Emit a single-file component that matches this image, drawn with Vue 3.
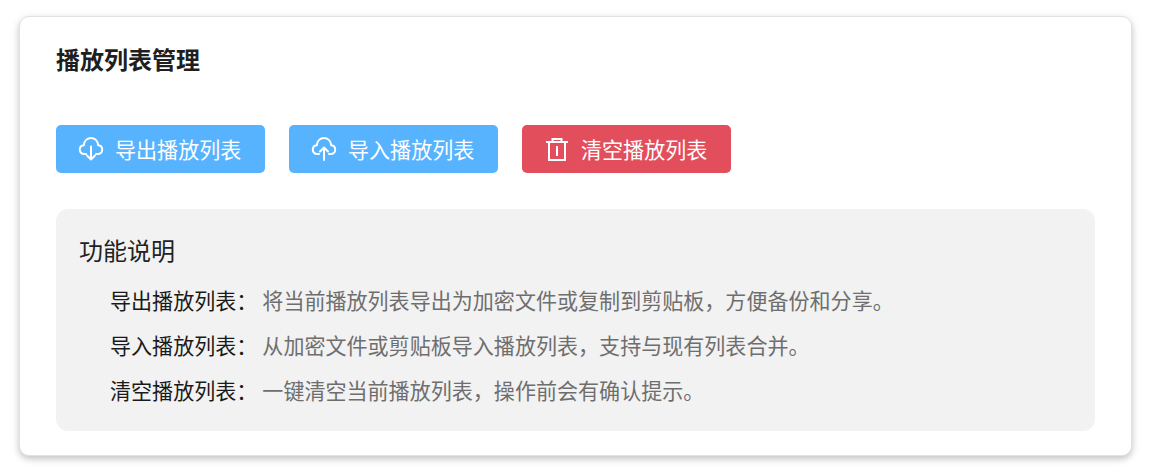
<template>
  <div class="page">
    <section class="card">
      <h2 class="title">播放列表管理</h2>
      <div class="actions">
        <button v-for="btn in buttons" :key="btn.label" class="btn" :class="btn.type">
          <svg v-if="btn.icon === 'down'" class="icon" viewBox="0 0 26 26" fill="none" stroke="currentColor" stroke-width="2" stroke-linecap="round" stroke-linejoin="round">
            <path d="M8 18H6.2C3.6 18 1.8 16 1.8 13.7C1.8 11.4 3.5 9.5 5.8 9.3C6.3 5 9.3 2 13 2C16.7 2 19.7 5 20.2 9.3C22.5 9.5 24.2 11.4 24.2 13.7C24.2 16 22.4 18 19.8 18H18" />
            <path d="M13 10.5V23.5M9 19.5L13 23.5L17 19.5" />
          </svg>
          <svg v-else-if="btn.icon === 'up'" class="icon" viewBox="0 0 26 26" fill="none" stroke="currentColor" stroke-width="2" stroke-linecap="round" stroke-linejoin="round">
            <path d="M8 18H6.2C3.6 18 1.8 16 1.8 13.7C1.8 11.4 3.5 9.5 5.8 9.3C6.3 5 9.3 2 13 2C16.7 2 19.7 5 20.2 9.3C22.5 9.5 24.2 11.4 24.2 13.7C24.2 16 22.4 18 19.8 18H18" />
            <path d="M13 24V11.5M9 15.5L13 11.5L17 15.5" />
          </svg>
          <svg v-else class="icon" viewBox="0 0 26 26" fill="none" stroke="currentColor" stroke-width="2">
            <path d="M2 6H24M8.5 6V3H17.5V6M5 6V24H21V6M13 10V20" />
          </svg>
          <span>{{ btn.label }}</span>
        </button>
      </div>
      <div class="info">
        <h3 class="info-title">功能说明</h3>
        <ul class="info-list">
          <li v-for="item in items" :key="item.name">
            <span class="name">{{ item.name }}：</span><span class="desc">{{ item.desc }}</span>
          </li>
        </ul>
      </div>
    </section>
  </div>
</template>

<script setup>
const buttons = [
  { label: '导出播放列表', type: 'primary', icon: 'down' },
  { label: '导入播放列表', type: 'primary', icon: 'up' },
  { label: '清空播放列表', type: 'danger', icon: 'trash' },
]

const items = [
  { name: '导出播放列表', desc: '将当前播放列表导出为加密文件或复制到剪贴板，方便备份和分享。' },
  { name: '导入播放列表', desc: '从加密文件或剪贴板导入播放列表，支持与现有列表合并。' },
  { name: '清空播放列表', desc: '一键清空当前播放列表，操作前会有确认提示。' },
]
</script>

<style>
html,
body {
  margin: 0;
  background: #fff;
}
</style>

<style scoped>
.page {
  padding: 16px 18px 19px 19px;
  font-family: "Noto Sans CJK SC", "Noto Sans", sans-serif;
}

.card {
  height: 440px;
  box-sizing: border-box;
  padding: 22px 36px;
  background: #fff;
  border: 1px solid #e2e2e2;
  border-radius: 10px;
  box-shadow: 0 3px 6px rgba(0, 0, 0, 0.2), 0 2px 14px rgba(0, 0, 0, 0.05);
}

.title {
  margin: 0;
  height: 40px;
  line-height: 40px;
  font-size: 24px;
  font-weight: 700;
  color: #1f1f1f;
}

.actions {
  display: flex;
  gap: 24px;
  margin-top: 46px;
}

.btn {
  display: flex;
  align-items: center;
  gap: 11px;
  width: 209px;
  height: 48px;
  padding: 0 22px;
  box-sizing: border-box;
  border: none;
  border-radius: 5px;
  color: #fff;
  font: inherit;
  font-size: 21.05px;
}

.primary {
  background: #58b3ff;
}

.danger {
  background: #e34e5c;
}

.icon {
  width: 26px;
  height: 26px;
  flex: none;
}

.info {
  margin-top: 36px;
  padding: 23px 24px 18px 23px;
  background: #f2f2f2;
  border-radius: 12px;
}

.info-title {
  margin: 0;
  font-size: 24px;
  line-height: 36px;
  font-weight: 400;
  color: #222;
}

.info-list {
  list-style: none;
  margin: 10px 0 0;
  padding: 0 0 0 31px;
}

.info-list li {
  height: 45px;
  line-height: 45px;
  font-size: 21.05px;
  white-space: nowrap;
}

.name {
  margin-right: 5px;
  color: #1a1a1a;
}

.desc {
  color: #6e6e6e;
}
</style>
